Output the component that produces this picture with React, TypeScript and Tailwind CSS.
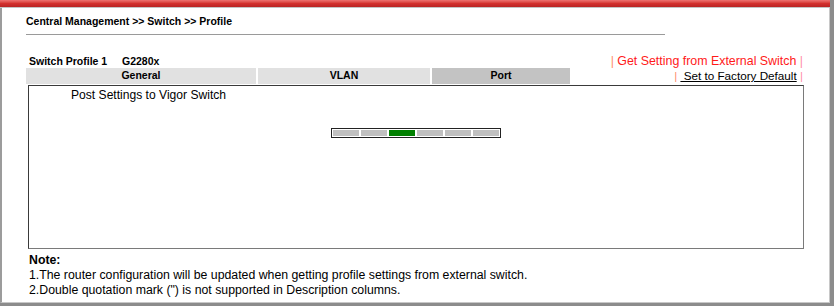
export default function App() {
  const segs = [0, 1, 2, 3, 4, 5];
  return (
    <div className="w-[834px] h-[306px] bg-[#8c8c8c] overflow-hidden font-['Liberation_Sans',Arial,sans-serif] text-black">
      <div className="w-[830px] h-[303px] flex flex-col">
        <div className="h-[7px] w-full bg-linear-to-b from-[#ee7272] via-[#d3302e] to-[#b92424]" />
        <div className="h-px w-full bg-[#c4c4c4]" />
        <div className="flex-1 bg-white border-l-2 border-l-[#9c9c9c] border-r border-r-[#c8c8c8] border-b border-b-[#c8c8c8] flex flex-col">
          <div className="mt-[6px] pl-[24px] text-[10.5px] font-bold leading-[14px]">
            Central Management &gt;&gt; Switch &gt;&gt; Profile
          </div>
          <div className="mt-[6px] ml-[24px] w-[639px] h-px bg-[#9a9a9a]" />
          <div className="ml-[24px] w-[779px] flex flex-col">
            <div className="mt-[18px] h-[15px] flex items-center">
              <div className="pl-[3px] flex text-[10.5px] font-bold leading-[14px]">
                <span className="w-[93px]">Switch Profile 1</span>
                <span>G2280x</span>
              </div>
              <div className="flex-1 flex justify-end pr-[2px] text-[12.4px] leading-[14px] whitespace-pre">
                <span className="text-[#ff8f6f]">|</span>
                <span className="text-[#ff1a1a]"> Get Setting from External Switch </span>
                <span className="text-[#ff8fa8]">|</span>
              </div>
            </div>
            <div className="h-[16px] flex items-stretch">
              <div className="w-[230px] bg-[#e1e1e1] flex items-center justify-center text-[10.5px] font-bold">General</div>
              <div className="w-[172px] ml-[2px] bg-[#e1e1e1] flex items-center justify-center text-[10.5px] font-bold">VLAN</div>
              <div className="w-[138px] ml-[2px] bg-[#c3c3c3] flex items-center justify-center text-[10.5px] font-bold">Port</div>
              <div className="flex-1 flex items-center justify-end pr-[2px] text-[11.7px] leading-[14px] whitespace-pre">
                <span className="text-[#ff8f6f]">|</span>
                <span> </span>
                <span className="underline text-black"> Set to Factory Default</span>
                <span> </span>
                <span className="text-[#ff8fa8]">|</span>
              </div>
            </div>
            <div className="mt-px ml-[2px] w-[776px] h-[164px] border border-t-[#3a3a3a] border-l-[#3a3a3a] border-r-[#7a7a7a] border-b-[#7a7a7a] flex flex-col">
              <div className="pt-[2px] pl-[42px] text-[12.1px] leading-[14px]">Post Settings to Vigor Switch</div>
              <div className="mt-[26px] flex justify-center">
                <div className="border border-[#222] bg-white p-px flex gap-[2px]">
                  {segs.map((i) => (
                    <div key={i} className={i === 2 ? "w-[26px] h-[6px] bg-[#008000]" : "w-[26px] h-[6px] bg-[#c0c0c0]"} />
                  ))}
                </div>
              </div>
            </div>
            <div className="mt-[4px] pl-[3px] text-[12.3px] leading-[15px]">
              <div className="font-bold">Note:</div>
              <div>1.The router configuration will be updated when getting profile settings from external switch.</div>
              <div>2.Double quotation mark (&quot;) is not supported in Description columns.</div>
            </div>
          </div>
        </div>
      </div>
    </div>
  );
}
